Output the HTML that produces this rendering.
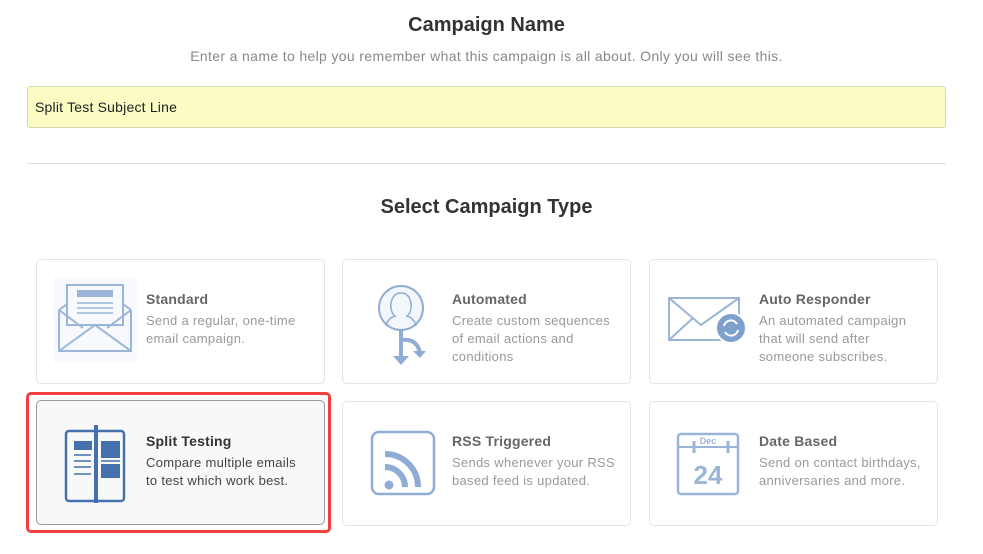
<!DOCTYPE html>
<html><head><style>
body{margin:0;width:983px;height:554px;background:#fff;font-family:"Liberation Sans",sans-serif;position:relative;overflow:hidden}
.h{position:absolute;left:0;width:973px;text-align:center;color:#333;font-weight:bold;font-size:20px}
.sub{position:absolute;top:48px;left:0;width:973px;text-align:center;color:#888;font-size:14px;letter-spacing:0.35px}
.inp{position:absolute;left:27px;top:86px;width:919px;height:42px;background:#fafcc4;border:1px solid #d6d8b0;border-radius:3px;box-sizing:border-box;font-size:14px;color:#222;padding:12px 7px;letter-spacing:0.2px}
.hr{position:absolute;left:27px;top:163px;width:919px;height:1px;background:#ddd}
.card{position:absolute;width:289px;height:125px;border:1px solid #e4e4e4;border-radius:5px;box-sizing:border-box;background:#fff}
.card svg{position:absolute;left:16px;top:18px}
.t{position:absolute;left:109px;top:31px;font-size:14px;font-weight:bold;color:#666;letter-spacing:0.2px}
.d{position:absolute;left:109px;top:52px;font-size:13px;line-height:18px;color:#999;width:168px;letter-spacing:0.3px}
.sel .t{color:#333}.sel .d{color:#444}
</style></head><body>
<div class="h" style="top:14px">Campaign Name</div>
<div class="sub">Enter a name to help you remember what this campaign is all about. Only you will see this.</div>
<div class="inp">Split Test Subject Line</div>
<div class="hr"></div>
<div class="h" style="top:196px">Select Campaign Type</div>

<div class="card" style="left:36px;top:259px">
<svg width="84" height="84" viewBox="0 0 84 84"><rect width="84" height="84" fill="#f7f9fc"/><g fill="none" stroke="#9ab5d8" stroke-width="2"><rect x="14" y="7" width="56" height="40" fill="#f7f9fc"/><path d="M6 32 L6 73 L78 73 L78 32 M6 32 L14 26 M78 32 L70 26 M6 73 L42 47 L78 73 M6 32 L30 50 M78 32 L54 50"/></g><rect x="24" y="12" width="36" height="7" fill="#9ab5d8"/><g stroke="#9ab5d8" stroke-width="1.5"><path d="M24 25h36M24 30h36M24 35h36"/></g></svg>
<div class="t">Standard</div><div class="d">Send a regular, one-time email campaign.</div></div>

<div class="card" style="left:342px;top:259px">
<svg width="84" height="90" viewBox="0 0 84 90"><circle cx="42" cy="30" r="22" fill="#f3f6fb" stroke="#8fadd4" stroke-width="2"/><path d="M27 48 Q29 40 36 38 Q31 34 32 25 Q34 15 42 15 Q50 15 52 25 Q53 34 48 38 Q55 40 57 48" fill="none" stroke="#8fadd4" stroke-width="1.5"/><g stroke="#8fadd4" stroke-width="4" fill="none"><path d="M42 52 V82"/><path d="M42 62 Q58 60 61 75"/></g><path d="M34 78 h16 l-8 9z M54 73 h13 l-6 7z" fill="#8fadd4"/></svg>
<div class="t">Automated</div><div class="d">Create custom sequences of email actions and conditions</div></div>

<div class="card" style="left:649px;top:259px">
<svg width="84" height="84" viewBox="0 0 84 84"><g fill="none" stroke="#9ab5d8" stroke-width="2"><rect x="3" y="20" width="70" height="42"/><path d="M3 20 L35 47 L73 20 M3 62 L27 40"/></g><circle cx="65" cy="50" r="15" fill="#7ea0cc" stroke="#fff" stroke-width="2"/><g fill="none" stroke="#fff" stroke-width="2"><path d="M58 48 a7 7 0 0 1 13 -2 M72 52 a7 7 0 0 1 -13 2"/></g></svg>
<div class="t">Auto Responder</div><div class="d">An automated campaign that will send after someone subscribes.</div></div>

<div style="position:absolute;left:26px;top:392px;width:305px;height:141px;border:3px solid #f04040;border-radius:5px;box-sizing:border-box"></div>
<div class="card sel" style="left:36px;top:400px;background:#f8f8f8;border-color:#999">
<svg width="84" height="84" viewBox="0 0 84 84"><g fill="none" stroke="#4470ad" stroke-width="2.5"><rect x="13" y="12" width="58" height="70" rx="3"/></g><rect x="41" y="6" width="4" height="78" fill="#4470ad"/><rect x="21" y="22" width="18" height="9" fill="#4470ad"/><rect x="48" y="22" width="19" height="17" fill="#4470ad"/><rect x="48" y="45" width="19" height="14" fill="#4470ad"/><g stroke="#4470ad" stroke-width="1.5"><path d="M21 36h17M21 42h17M48 42h19M21 48h17M21 55h17"/></g></svg>
<div class="t" style="top:32px">Split Testing</div><div class="d" style="top:53px;width:158px">Compare multiple emails to test which work best.</div></div>

<div class="card" style="left:342px;top:401px">
<svg width="84" height="84" viewBox="0 0 84 84"><rect x="13" y="12" width="62" height="62" rx="7" fill="none" stroke="#8fadd4" stroke-width="2.5"/><circle cx="30" cy="65" r="4.5" fill="#8fadd4"/><g fill="none" stroke="#8fadd4" stroke-width="6"><path d="M26 47 a20 20 0 0 1 20 20"/><path d="M26 34 a33 33 0 0 1 33 33"/></g></svg>
<div class="t">RSS Triggered</div><div class="d">Sends whenever your RSS based feed is updated.</div></div>

<div class="card" style="left:649px;top:401px">
<svg width="84" height="84" viewBox="0 0 84 84"><rect x="12" y="14" width="60" height="60" rx="3" fill="none" stroke="#9ab5d8" stroke-width="2.5"/><path d="M12 27h60" stroke="#9ab5d8" stroke-width="2"/><path d="M28 21v12M62 21v12" stroke="#9ab5d8" stroke-width="3"/><text x="42" y="24" font-size="9" font-weight="bold" fill="#9ab5d8" text-anchor="middle" font-family="Liberation Sans">Dec</text><text x="42" y="64" font-size="26" font-weight="bold" fill="#9ab5d8" text-anchor="middle" font-family="Liberation Sans">24</text></svg>
<div class="t">Date Based</div><div class="d">Send on contact birthdays, anniversaries and more.</div></div>
</body></html>
